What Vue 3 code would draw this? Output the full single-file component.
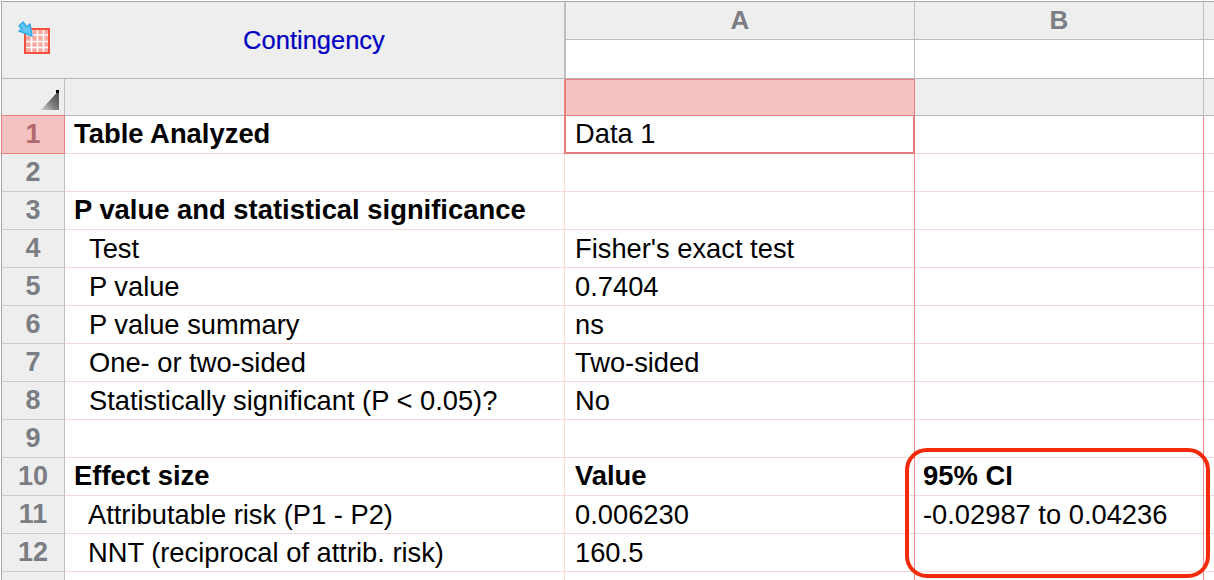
<script setup>
const rows = [
  { n: 1, label: 'Table Analyzed', a: 'Data 1', bold: true, active: true },
  { n: 2, label: '' },
  { n: 3, label: 'P value and statistical significance', bold: true },
  { n: 4, label: 'Test', a: "Fisher's exact test", indent: 'in16' },
  { n: 5, label: 'P value', a: '0.7404', indent: 'in16' },
  { n: 6, label: 'P value summary', a: 'ns', indent: 'in16' },
  { n: 7, label: 'One- or two-sided', a: 'Two-sided', indent: 'in16' },
  { n: 8, label: 'Statistically significant (P < 0.05)?', a: 'No', indent: 'in16' },
  { n: 9, label: '' },
  { n: 10, label: 'Effect size', a: 'Value', b: '95% CI', bold: true, boldAll: true },
  { n: 11, label: 'Attributable risk (P1 - P2)', a: '0.006230', b: '-0.02987 to 0.04236', indent: 'in15' },
  { n: 12, label: 'NNT (reciprocal of attrib. risk)', a: '160.5', indent: 'in15' },
  { n: '', label: '' },
]
</script>

<template>
  <div class="sheet">
    <div class="head">
      <div class="corner">
        <svg class="logo" width="34" height="38" viewBox="0 0 34 38">
          <rect x="7" y="11" width="24" height="24" fill="#f9a9a0" />
          <g stroke="#fff" stroke-width="1.6">
            <path d="M13.5 12v22M19.5 12v22M25.5 12v22M8 17h22M8 23.5h22M8 29.5h22" />
          </g>
          <rect x="7" y="11" width="24" height="24" fill="none" stroke="#f8503f" stroke-width="2" />
          <path d="M14 18 L12 6 L9 9 L5 4 L1 8 L4 11 L1 13 Z" fill="#62c6f6" stroke="#35a8e8" stroke-width="1.5" stroke-linejoin="round" />
        </svg>
        <span class="title">Contingency</span>
      </div>
      <div class="colhead">
        <div class="letter">A</div>
        <div class="blank"></div>
      </div>
      <div class="colhead">
        <div class="letter">B</div>
        <div class="blank"></div>
      </div>
      <div class="colhead last">
        <div class="letter"></div>
        <div class="blank"></div>
      </div>
    </div>
    <div class="sub">
      <div class="subnum">
        <svg class="tri" width="19" height="20" viewBox="0 0 19 20">
          <defs>
            <linearGradient id="triFill" x1="0" y1="1" x2="1" y2="0">
              <stop offset="0" stop-color="#d8d8d8" />
              <stop offset="0.5" stop-color="#777" />
              <stop offset="1" stop-color="#444" />
            </linearGradient>
          </defs>
          <path d="M0 20 L19 0 V20 Z" fill="url(#triFill)" />
          <path d="M1 19 L16 3" stroke="#fff" stroke-width="1" fill="none" />
          <rect x="16" y="0" width="3" height="3" fill="#000" />
        </svg>
      </div>
      <div class="sublabel"></div>
      <div class="suba"></div>
      <div class="subb"></div>
      <div class="subc"></div>
    </div>
    <div v-for="r in rows" :key="r.n" class="row">
      <div class="num" :class="{ numactive: r.active }">{{ r.n }}</div>
      <div class="cell label" :class="[r.indent, { strong: r.bold }]">{{ r.label }}</div>
      <div class="cell cola" :class="{ strong: r.boldAll, cellactive: r.active }">{{ r.a }}</div>
      <div class="cell colb" :class="{ strong: r.boldAll }">{{ r.b }}</div>
      <div class="cell colc"></div>
    </div>
    <div class="callout"></div>
  </div>
</template>

<style>
html, body { margin: 0; background: #fff; overflow: hidden; }
</style>

<style scoped>
.sheet {
  position: relative;
  width: 1214px;
  height: 580px;
  overflow: hidden;
  background: #fff;
  box-sizing: border-box;
  padding-top: 1px;
  padding-left: 1px;
  font-family: "Liberation Sans", Arial, sans-serif;
  font-size: 27.3px;
  color: #000;
}
.head {
  display: grid;
  grid-template-columns: 565px 349px 289px 1fr;
  height: 78px;
  border-top: 1px solid #a8a8a8;
  box-sizing: border-box;
  margin-right: -1px;
}
.corner {
  position: relative;
  background: #eeeeee;
  border-left: 1px solid #a8a8a8;
  border-right: 2px solid #bcc0c4;
  border-bottom: 1px solid #b4b8bc;
  box-sizing: border-box;
  display: flex;
  align-items: center;
  justify-content: center;
  padding-left: 62px;
}
.logo {
  position: absolute;
  left: 16px;
  top: 16px;
  overflow: visible;
}
.title {
  color: #0000c0;
  font-size: 25.5px;
  margin-top: 1px;
  -webkit-text-stroke: 0.2px #0000c0;
}
.colhead {
  display: flex;
  flex-direction: column;
  border-right: 1px solid #bcc0c4;
  border-bottom: 1px solid #b4b8bc;
  box-sizing: border-box;
}
.colhead.last {
  border-right: 0;
}
.letter {
  height: 38px;
  background: #eeeeee;
  border-bottom: 1px solid #b8bcc0;
  box-sizing: border-box;
  display: flex;
  align-items: center;
  justify-content: center;
  color: #7c7e84;
  font-weight: bold;
  font-size: 26px;
}
.blank {
  flex: 1;
  background: #fff;
}
.sub {
  display: grid;
  grid-template-columns: 64px 499px 351px 288px 1fr;
  height: 37px;
  background: #eeeeee;
  border-bottom: 1px solid #b4b8bc;
  box-sizing: border-box;
}
.subnum {
  border-left: 1px solid #a8a8a8;
  border-right: 1px solid #bcc0c4;
  display: flex;
  align-items: flex-end;
  justify-content: flex-end;
  padding: 0 5px 5px 0;
  box-sizing: border-box;
}
.tri {
  display: block;
}
.suba {
  background: #f5c2c2;
  border: 1px solid #e88080;
  border-bottom: 0;
  border-left-width: 2px;
}
.subc {
  border-left: 1px solid #bcc0c4;
}
.row {
  display: grid;
  grid-template-columns: 64px 499px 350px 289px 1fr;
  height: 38px;
  box-sizing: border-box;
  border-bottom: 1px solid #f2d8d6;
}
.num {
  margin-bottom: -1px;
  background: #eeeeee;
  border-left: 1px solid #a8a8a8;
  border-right: 1px solid #bcc0c4;
  border-bottom: 1px solid #c8ccd0;
  box-sizing: border-box;
  color: #7c7e84;
  font-weight: bold;
  font-size: 27px;
  display: flex;
  align-items: center;
  justify-content: center;
}
.numactive {
  margin-top: -1px;
  background: #f5c2c2;
  border: 1px solid #ec7f7f;
  color: #b06a6e;
}
.cell {
  display: flex;
  align-items: center;
  padding-left: 9px;
  white-space: pre;
  box-sizing: border-box;
}
.in16 { padding-left: 24px; }
.in15 { padding-left: 23px; }
.strong {
  font-weight: bold;
  font-size: 27.4px;
  padding-bottom: 2px;
}
.cola {
  border-left: 1px solid #fddcd2;
  padding-left: 10px;
  margin-bottom: -1px;
}
.colb {
  border-left: 1px solid #ec8c8c;
  padding-left: 8px;
  margin-bottom: -1px;
}
.colc {
  border-left: 1px solid #ec8c8c;
  margin-bottom: -1px;
}
.cellactive {
  border: 2px solid #e67c7c;
  border-top-width: 1px;
  margin-top: -1px;
  margin-bottom: -1px;
  margin-right: -1px;
  padding-left: 9px;
  position: relative;
}
.callout {
  position: absolute;
  left: 905px;
  top: 448px;
  width: 305px;
  height: 130px;
  box-sizing: border-box;
  border: 4px solid #f52a0a;
  border-radius: 22px;
}
</style>
